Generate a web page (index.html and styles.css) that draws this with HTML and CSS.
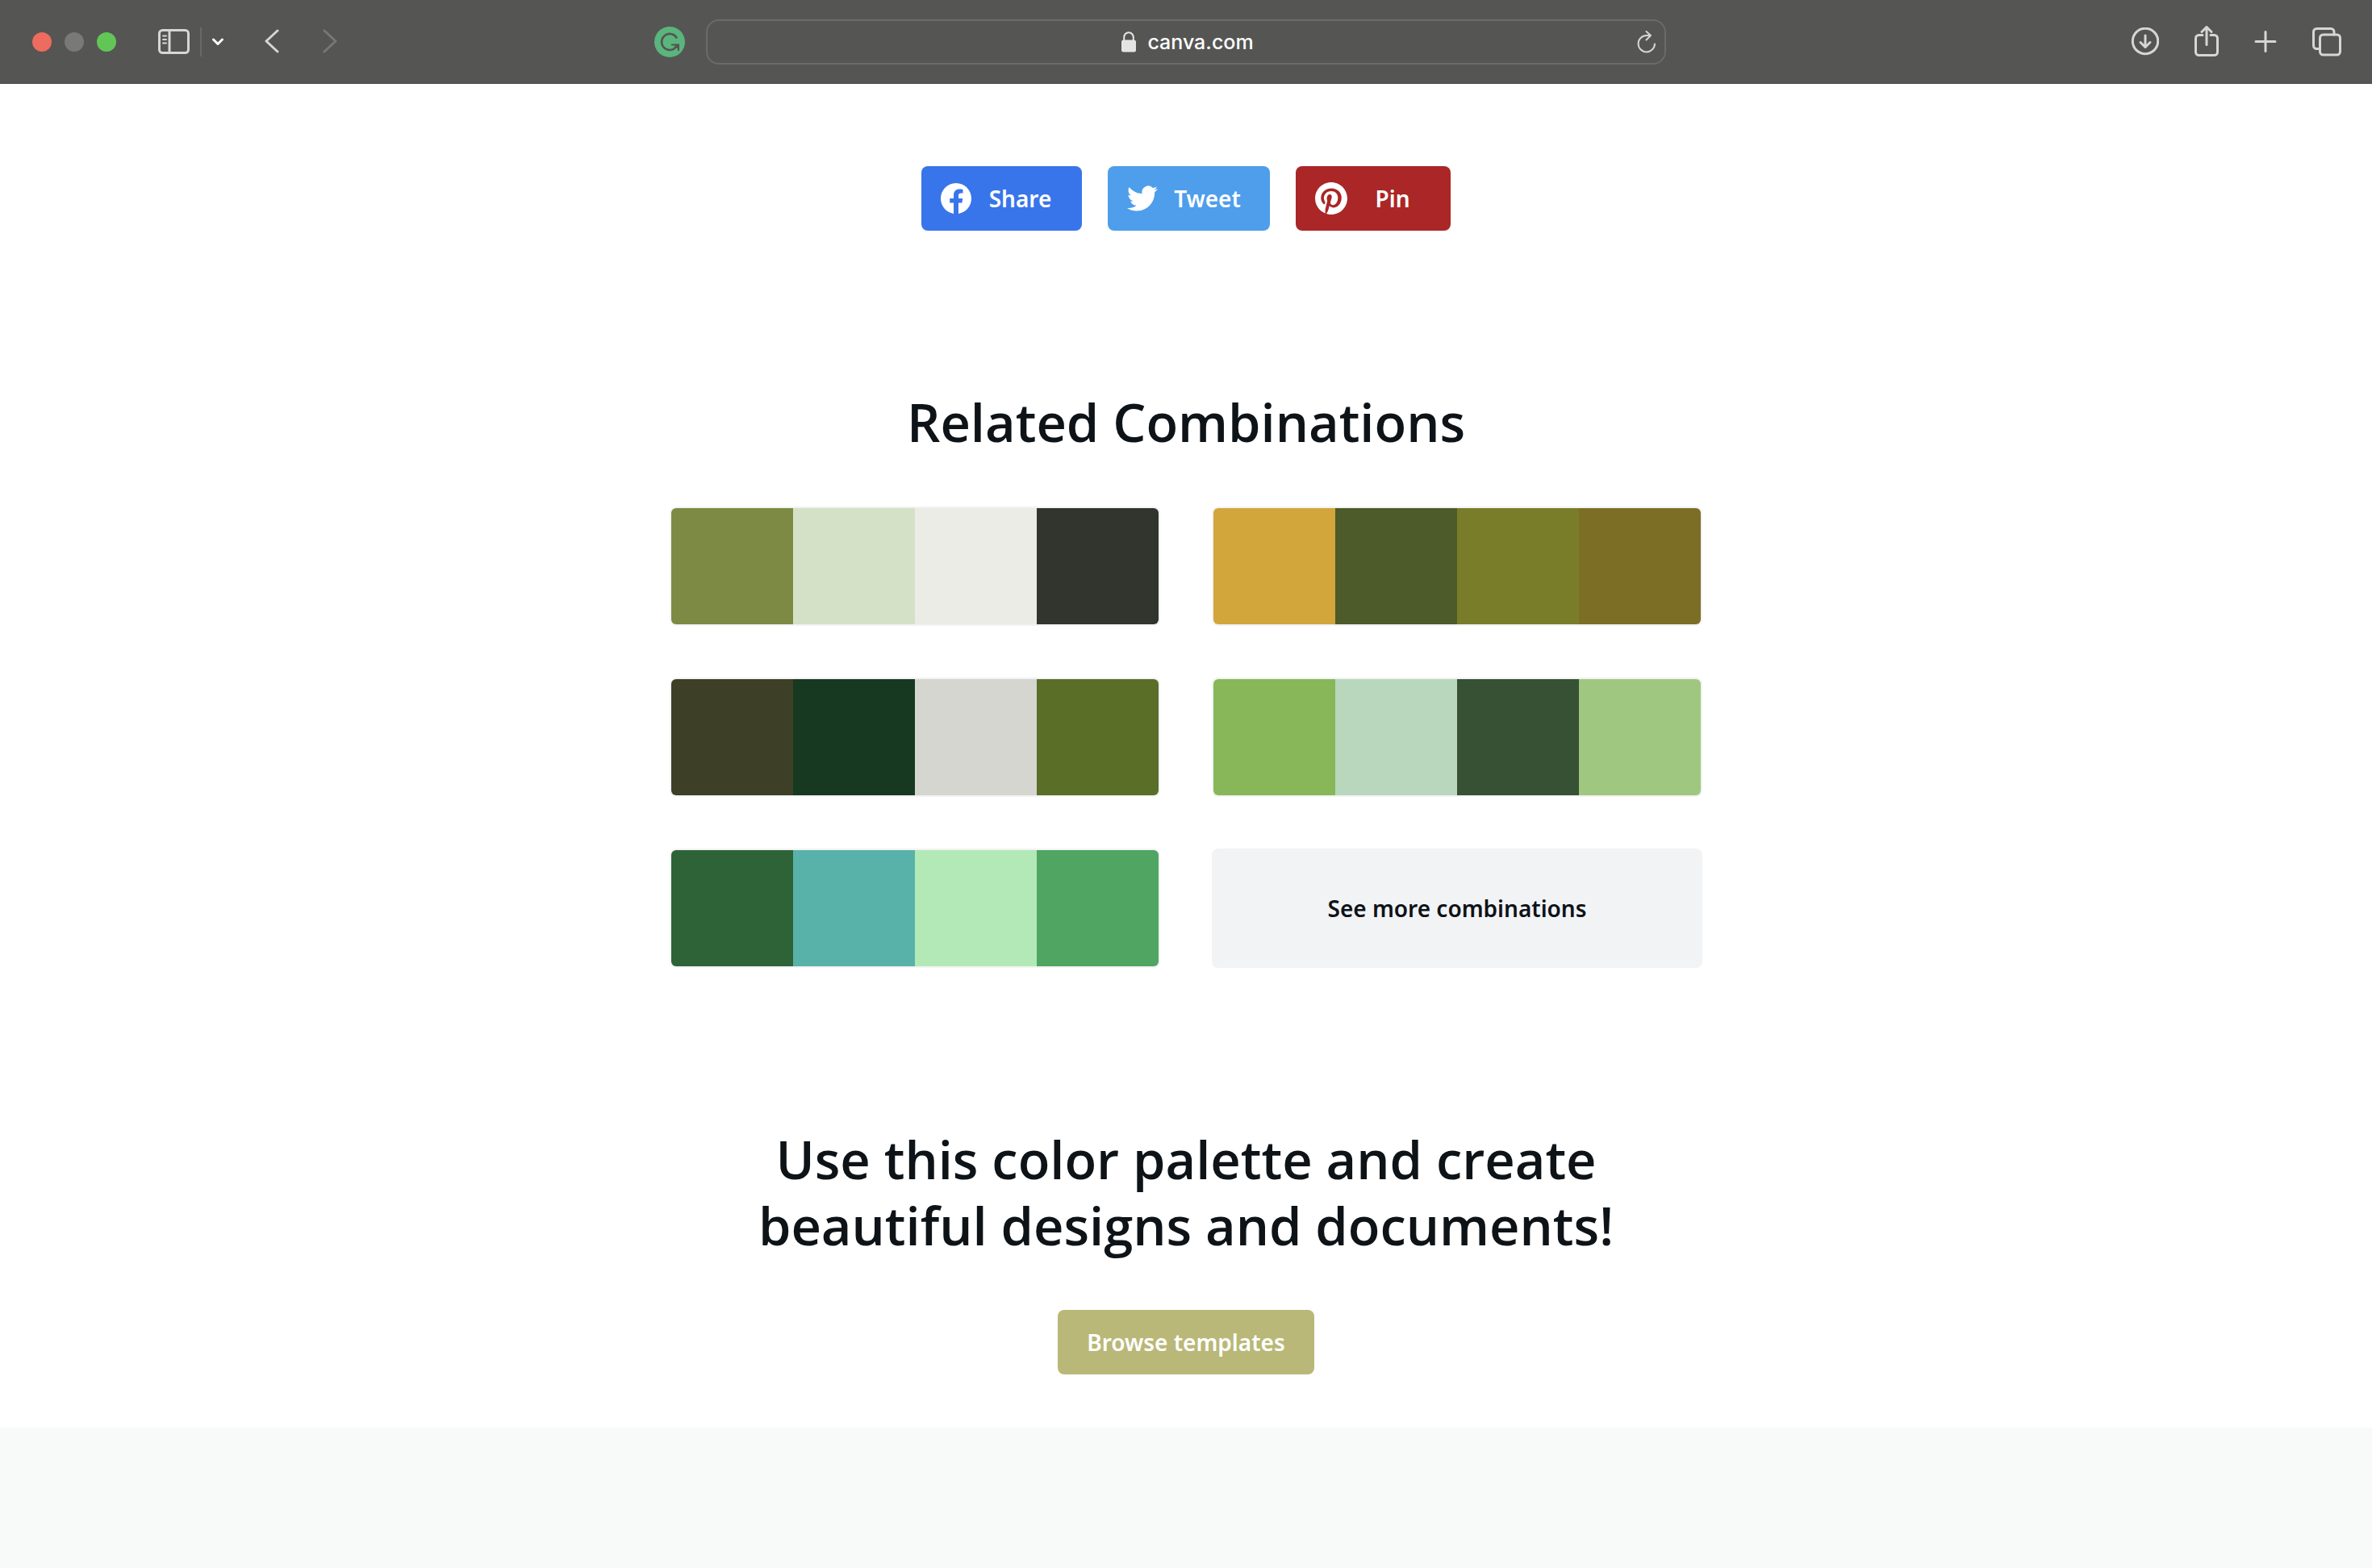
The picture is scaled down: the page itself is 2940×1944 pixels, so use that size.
FILE: index.html
```html
<!DOCTYPE html>
<html lang="en">
<head>
<meta charset="utf-8">
<meta name="viewport" content="width=device-width, initial-scale=1">
<title>Related Combinations</title>
<link rel="stylesheet" href="styles.css">
</head>
<body>
<header class="toolbar">
  <div class="toolbar-side">
    <div class="window-controls">
      <button class="light light-close" aria-label="Close"></button>
      <button class="light light-minimize" aria-label="Minimize"></button>
      <button class="light light-zoom" aria-label="Zoom"></button>
    </div>
    <div class="sidebar-controls">
      <button class="tool" aria-label="Sidebar">
        <svg class="icon" width="40" height="32" viewBox="0 0 40 32"><rect x="1.5" y="1.5" width="36" height="28" rx="4"/><path d="M14 2v27"/><path class="thin" d="M6 8.500h4M6 13h4M6 17.500h4"/></svg>
      </button>
      <span class="divider"></span>
      <button class="tool tool-bright" aria-label="Tab groups">
        <svg class="icon" width="16" height="12" viewBox="0 0 16 12"><path d="M2.500 3l5.500 5.500L13.500 3"/></svg>
      </button>
    </div>
    <nav class="history">
      <button class="tool" aria-label="Back">
        <svg class="icon" width="20" height="32" viewBox="0 0 20 32"><path d="M16 2L2 15l14 13"/></svg>
      </button>
      <button class="tool tool-off" aria-label="Forward">
        <svg class="icon" width="20" height="32" viewBox="0 0 20 32"><path d="M2 2l14 13L2 28"/></svg>
      </button>
    </nav>
    <button class="tool extension" aria-label="Writing assistant">
      <svg width="38" height="38" viewBox="0 0 38 38"><circle cx="19" cy="19" r="19" fill="#5ab57c"/><path d="M28 14.500A10 10 0 1 0 27 25" fill="none" stroke="#555553" stroke-width="2.600"/><path d="M21 22.500h9v7.500" fill="none" stroke="#555553" stroke-width="2"/><path d="M24 22h6v7z" fill="#555553"/></svg>
    </button>
  </div>
  <div class="address">
    <a class="address-link" href="#">
      <svg width="18" height="26" viewBox="0 0 18 26"><rect y="10.500" width="18" height="15" rx="2.500" fill="#e5e5e3"/><path d="M3.200 11V7.500a5.800 6.300 0 0 1 11.600 0V11" fill="none" stroke="#e5e5e3" stroke-width="2"/></svg>
      <span>canva.com</span>
    </a>
    <button class="tool reload" aria-label="Reload">
      <svg class="icon icon-fine" width="24" height="30" viewBox="0 0 24 30"><path d="M22 17.500A10.200 10.200 0 1 1 11.800 7H16.500"/><path d="M11.500 2l5.500 5-5.500 5.500"/></svg>
    </button>
  </div>
  <div class="toolbar-side toolbar-actions">
    <button class="tool" aria-label="Downloads">
      <svg class="icon" width="36" height="36" viewBox="0 0 36 36"><circle cx="19" cy="17" r="15.700"/><path d="M19 10v14.500M13 18.500l6 6 6-6"/></svg>
    </button>
    <button class="tool" aria-label="Share">
      <svg class="icon" width="30" height="40" viewBox="0 0 30 40"><path d="M10 11.500H5.500a4 4 0 0 0-4 4v17a4 4 0 0 0 4 4h19a4 4 0 0 0 4-4v-17a4 4 0 0 0-4-4H20"/><path d="M15 23.500V2.500M9 7.500l6-6 6 6"/></svg>
    </button>
    <button class="tool" aria-label="New tab">
      <svg class="icon" width="28" height="28" viewBox="0 0 28 28"><path d="M14 1.500v24M2 13.500h24"/></svg>
    </button>
    <button class="tool" aria-label="Tab overview">
      <svg class="icon" width="36" height="36" viewBox="0 0 36 36"><rect x="9.500" y="9" width="25" height="25" rx="4"/><path d="M9 26.500H5.500a4 4 0 0 1-4-4V5.500a4 4 0 0 1 4-4H23a4 4 0 0 1 4 4V9"/></svg>
    </button>
  </div>
</header>

<main class="content">
  <div class="social">
    <a class="button share" href="#">
      <svg width="38" height="38" viewBox="0 0 24 24"><path fill="#fff" d="M24 12.073c0-6.627-5.373-12-12-12s-12 5.373-12 12c0 5.990 4.388 10.954 10.125 11.854v-8.385H7.078v-3.470h3.047V9.430c0-3.007 1.792-4.669 4.533-4.669 1.312 0 2.686.235 2.686.235v2.953H15.830c-1.491 0-1.956.925-1.956 1.874v2.250h3.328l-.532 3.470h-2.796v8.385C19.612 23.027 24 18.062 24 12.073z"/></svg>
      <span class="button-label">Share</span>
    </a>
    <a class="button tweet" href="#">
      <svg width="38" height="38" viewBox="0 0 24 24"><path fill="#fff" d="M23.953 4.570a10 10 0 01-2.825.775 4.958 4.958 0 002.163-2.723c-.951.555-2.005.959-3.127 1.184a4.920 4.920 0 00-8.384 4.482C7.690 8.095 4.067 6.130 1.640 3.162a4.822 4.822 0 00-.666 2.475c0 1.710.870 3.213 2.188 4.096a4.904 4.904 0 01-2.228-.616v.060a4.923 4.923 0 003.946 4.827 4.996 4.996 0 01-2.212.085 4.936 4.936 0 004.604 3.417 9.867 9.867 0 01-6.102 2.105c-.390 0-.779-.023-1.170-.067a13.995 13.995 0 007.557 2.209c9.053 0 13.998-7.496 13.998-13.985 0-.210 0-.420-.015-.630A9.935 9.935 0 0024 4.590z"/></svg>
      <span class="button-label">Tweet</span>
    </a>
    <a class="button pin" href="#">
      <svg width="40" height="40" viewBox="0 0 24 24"><path fill="#fff" d="M12.017 0C5.396 0 .029 5.367.029 11.987c0 5.079 3.158 9.417 7.618 11.162-.105-.949-.199-2.403.041-3.439.219-.937 1.406-5.957 1.406-5.957s-.359-.720-.359-1.781c0-1.663.967-2.911 2.168-2.911 1.024 0 1.518.769 1.518 1.688 0 1.029-.653 2.567-.992 3.992-.285 1.193.600 2.165 1.775 2.165 2.128 0 3.768-2.245 3.768-5.487 0-2.861-2.063-4.869-5.008-4.869-3.410 0-5.409 2.562-5.409 5.199 0 1.033.394 2.143.889 2.741.099.120.112.225.085.345-.090.375-.293 1.199-.334 1.363-.053.225-.172.271-.401.165-1.495-.690-2.433-2.878-2.433-4.646 0-3.776 2.748-7.252 7.920-7.252 4.158 0 7.392 2.967 7.392 6.923 0 4.135-2.607 7.462-6.233 7.462-1.214 0-2.354-.629-2.758-1.379l-.749 2.848c-.269 1.045-1.004 2.352-1.498 3.146 1.123.345 2.306.535 3.550.535 6.607 0 11.985-5.365 11.985-11.987C23.970 5.390 18.592.026 11.985.026L12.017 0z"/></svg>
      <span class="button-label">Pin</span>
    </a>
  </div>

  <section class="related">
    <h2 class="heading">Related Combinations</h2>
    <div class="palettes">
      <a class="palette" href="#" aria-label="Olive, mint, ivory, charcoal">
        <span style="background:#7d8a43"></span><span style="background:#d4e1c6"></span><span style="background:#ebece6"></span><span style="background:#32342e"></span>
      </a>
      <a class="palette" href="#" aria-label="Gold, moss, olive, bronze">
        <span style="background:#d2a63a"></span><span style="background:#4d5a29"></span><span style="background:#797d2a"></span><span style="background:#7d6e26"></span>
      </a>
      <a class="palette" href="#" aria-label="Bark, pine, stone, fern">
        <span style="background:#3d3f26"></span><span style="background:#173922"></span><span style="background:#d4d6cf"></span><span style="background:#5a6e28"></span>
      </a>
      <a class="palette" href="#" aria-label="Grass, mist, forest, pear">
        <span style="background:#87b758"></span><span style="background:#b9d7bc"></span><span style="background:#375135"></span><span style="background:#a0c77f"></span>
      </a>
      <a class="palette" href="#" aria-label="Forest, teal, mint, emerald">
        <span style="background:#2e6337"></span><span style="background:#58b2a9"></span><span style="background:#b3e9b6"></span><span style="background:#4fa561"></span>
      </a>
      <a class="palette palette-more" href="#">See more combinations</a>
    </div>
  </section>

  <section class="promo">
    <h2 class="heading">Use this color palette and create beautiful designs and documents!</h2>
    <a class="button browse" href="#">Browse templates</a>
  </section>
</main>
<footer class="footer"></footer>
</body>
</html>
```

FILE: styles.css
```css
*,
*::before,
*::after {
  box-sizing: border-box;
}

body {
  display: flex;
  flex-direction: column;
  min-height: 100vh;
  margin: 0;
  background: #fff;
  color: #0e1318;
  font-family: "Noto Sans", sans-serif;
  font-size: 28px;
  line-height: 40px;
}

a {
  color: inherit;
  text-decoration: none;
}

svg {
  display: block;
  flex: none;
}

/* Browser toolbar */
.toolbar {
  display: grid;
  grid-template-columns: 1fr minmax(0, 1190px) 1fr;
  align-items: center;
  height: 104px;
  border-bottom: 1px solid #4a4a48;
  background: #555553;
}

.toolbar-side,
.window-controls,
.sidebar-controls,
.history {
  display: flex;
  align-items: center;
}

.toolbar-side {
  padding: 0 26px 0 40px;
}

.window-controls {
  gap: 16px;
}

.light {
  width: 24px;
  height: 24px;
  padding: 0;
  border: 0;
  border-radius: 50%;
}

.light-close {
  background: #ed6b5f;
}

.light-minimize {
  background: #797977;
}

.light-zoom {
  background: #62c656;
}

.tool {
  padding: 0;
  border: 0;
  background: none;
  color: #d6d6d4;
}

.tool-bright {
  color: #fff;
}

.tool-off {
  color: #777775;
}

.icon {
  fill: none;
  stroke: currentColor;
  stroke-width: 3;
  stroke-linecap: round;
  stroke-linejoin: round;
}

.icon .thin,
.icon-fine {
  stroke-width: 2;
}

.sidebar-controls {
  gap: 12px;
  margin-left: 52px;
}

.divider {
  width: 2px;
  height: 36px;
  background: #696967;
}

.history {
  gap: 52px;
  margin-left: 50px;
}

.extension {
  margin-left: auto;
}

.address {
  display: grid;
  grid-template-columns: 1fr auto 1fr;
  align-items: center;
  height: 56px;
  padding: 0 10px 0 14px;
  border: 2px solid #6b6b69;
  border-radius: 16px;
}

.address-link {
  display: flex;
  grid-column: 2;
  gap: 14px;
  align-items: center;
  color: #fff;
  font-family: Inter, sans-serif;
  font-size: 25px;
  font-weight: 500;
}

.reload {
  justify-self: end;
}

.toolbar-actions {
  gap: 44px;
  justify-content: flex-end;
  padding: 0 38px;
}

/* Page */
.content {
  display: flex;
  flex: 1;
  flex-direction: column;
  align-items: center;
  padding: 102px 40px 66px;
}

.button {
  display: flex;
  align-items: center;
  height: 80px;
  border-radius: 8px;
  color: #fff;
  font-weight: 600;
}

.social {
  display: flex;
  gap: 32px;
}

.social .button {
  padding: 0 16px 0 24px;
}

.button-label {
  flex: 1;
  text-align: center;
}

.share {
  width: 199px;
  background: #3975ea;
}

.tweet {
  width: 201px;
  background: #4e9eeb;
}

.pin {
  width: 192px;
  background: #ab2626;
}

.heading {
  margin: 0;
  font-family: "Open Sans", sans-serif;
  font-size: 65px;
  font-weight: 600;
  line-height: 82px;
  text-align: center;
}

.related {
  width: 100%;
  max-width: 1280px;
  margin-top: 196px;
}

.palettes {
  display: grid;
  grid-template-columns: 1fr 1fr;
  gap: 64px;
  margin-top: 64px;
}

.palette {
  display: flex;
  height: 148px;
  overflow: hidden;
  border: 2px solid #f2f3f5;
  border-radius: 8px;
}

.palette span {
  flex: 1;
}

.palette-more {
  align-items: center;
  justify-content: center;
  background: #f2f3f5;
  font-weight: 600;
}

.promo {
  display: flex;
  flex-direction: column;
  align-items: center;
  max-width: 1280px;
  margin-top: 196px;
}

.promo .heading {
  max-width: 1200px;
}

.browse {
  margin-top: 64px;
  padding: 0 36px;
  background: #b9b878;
}

.footer {
  height: 174px;
  background: #f8faf9;
}
```
